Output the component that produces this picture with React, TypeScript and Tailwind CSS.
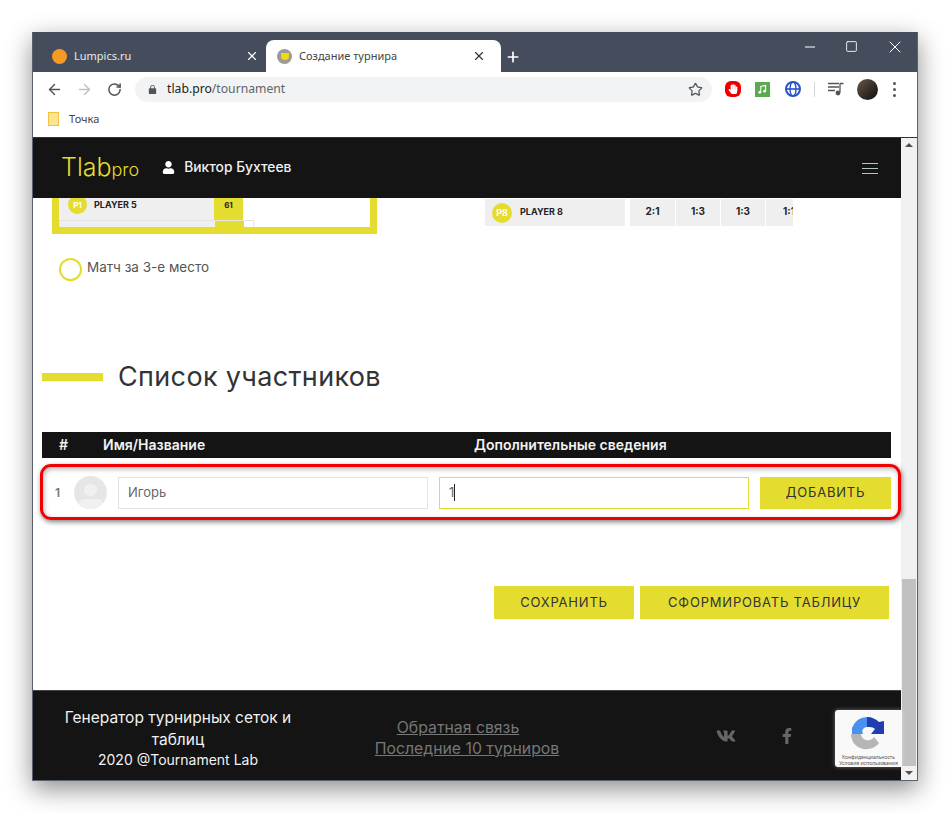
import React from 'react';
import { ArrowLeft, ArrowRight, RotateCw, Star, X, Plus, Minus, Square } from 'lucide-react';
import { FaVk, FaFacebookF, FaUser, FaHandPaper } from 'react-icons/fa';

const heading = "font-['Inter','Noto_Sans',sans-serif]";

function Tab({ active, title, icon }: { active?: boolean; title: string; icon: React.ReactNode }) {
    return (
        <div className={active
            ? "flex items-center w-[235px] h-[32px] bg-white rounded-t-lg pl-[11px] pr-[15px] text-[#444]"
            : "flex items-center w-[233px] h-[32px] pl-[19px] pr-[7px] text-[#e8eaed]"}>
            {icon}
            <span className="ml-[7px] flex-1 text-[11px] font-['Noto_Sans',sans-serif]">{title}</span>
            <X className={active ? "w-[14px] h-[14px] text-[#333]" : "w-[14px] h-[14px] text-white"} />
        </div>
    );
}

function ScoreCell({ text, width, clipped }: { text: string; width: string; clipped?: boolean }) {
    return (
        <div className={`${width} h-[27px] bg-[#efefef] flex items-center overflow-hidden pb-[2px] text-[10px] font-bold text-[#222] ${clipped ? 'justify-start pl-[17px]' : 'justify-center'}`}>
            <span className="whitespace-nowrap">{text}</span>
        </div>
    );
}

function Browser() {
    return (
        <>
            {/* Tab strip */}
            <div className="h-[40px] bg-[#454d5c] flex items-end relative shrink-0">
                <Tab
                    title="Lumpics.ru"
                    icon={<span className="w-[15px] h-[15px] rounded-full bg-[#f59a23] shrink-0" />}
                />
                <Tab
                    active
                    title="Создание турнира"
                    icon={
                        <span className="w-[15px] h-[15px] rounded-full bg-[#9a9a9a] flex items-center justify-center shrink-0">
                            <span className="w-[8px] h-[7px] rounded-b-full bg-[#f2d90f]" />
                        </span>
                    }
                />
                <Plus className="w-[16px] h-[16px] text-white ml-[4px] mb-[7px]" strokeWidth={2.5} />
                <div className="absolute right-[12px] top-[0px] flex items-center h-[21px] gap-[27px] mt-[4px] text-white">
                    <Minus className="w-[16px] h-[16px]" strokeWidth={1.5} />
                    <Square className="w-[13px] h-[13px]" strokeWidth={1.6} />
                    <X className="w-[20px] h-[20px]" strokeWidth={1.2} />
                </div>
            </div>

            {/* Toolbar */}
            <div className="h-[34px] bg-white flex items-center shrink-0 pl-[13px]">
                <ArrowLeft className="w-[17px] h-[17px] text-[#555]" />
                <ArrowRight className="w-[17px] h-[17px] text-[#c0c0c0] ml-[13px]" />
                <RotateCw className="w-[15px] h-[15px] text-[#555] ml-[14px]" strokeWidth={2.4} />
                <div className="ml-[13px] mt-[1px] w-[577px] h-[25px] rounded-full bg-[#f1f3f4] flex items-center pl-[12px] pr-[9px]">
                    <svg viewBox="0 0 24 24" className="w-[11px] h-[13px] fill-[#555]">
                        <path d="M18 9h-1V7a5 5 0 0 0-10 0v2H6a2 2 0 0 0-2 2v9a2 2 0 0 0 2 2h12a2 2 0 0 0 2-2v-9a2 2 0 0 0-2-2zM9 7a3 3 0 0 1 6 0v2H9z" />
                    </svg>
                    <span className="ml-[9px] flex-1 text-[12.2px] text-[#5f6368] font-['Noto_Sans',sans-serif]">
                        <span className="text-[#222]">tlab.pro</span>/tournament
                    </span>
                    <Star className="w-[15px] h-[15px] text-[#555]" />
                </div>
                <span className="ml-[13px] w-[16px] h-[16px] flex items-center justify-center bg-[#ee0000] rounded-[6px]">
                    <FaHandPaper className="w-[10px] h-[10px] text-white" />
                </span>
                <span className="ml-[14px] w-[15px] h-[15px] bg-[#5aab4f] flex items-center justify-center">
                    <svg viewBox="0 0 16 16" className="w-[11px] h-[11px]">
                        <path d="M5.500 12V3.500l7-1.500v8.500" stroke="#fff" strokeWidth="1.500" fill="none" />
                        <circle cx="4" cy="12" r="2" fill="#fff" />
                        <circle cx="11" cy="10.500" r="2" fill="#fff" />
                    </svg>
                </span>
                <svg viewBox="0 0 16 16" className="ml-[15px] w-[16px] h-[16px]">
                    <circle cx="8" cy="8" r="7" fill="none" stroke="#2a52c8" strokeWidth="2" />
                    <ellipse cx="8" cy="8" rx="3" ry="7" fill="none" stroke="#2a52c8" strokeWidth="1.4" />
                    <path d="M1 8h14" stroke="#2a52c8" strokeWidth="1.6" />
                </svg>
                <span className="ml-[13px] w-px h-[15px] bg-[#d5d5d5]" />
                <svg viewBox="0 0 16 14" className="ml-[13px] w-[16px] h-[14px]">
                    <path d="M0 1.500h11M0 5h11M0 8.500h7M12 1.500h3.500M12 1.500v9" stroke="#555" strokeWidth="1.300" fill="none" />
                    <circle cx="10" cy="11" r="2.400" fill="#555" />
                </svg>
                <span className="ml-[13px] w-[21px] h-[21px] rounded-full bg-gradient-to-br from-[#6b5a4a] to-[#0e0e0e]" />
                <span className="ml-[15px] flex flex-col gap-[3px]">
                    <span className="w-[3px] h-[3px] rounded-full bg-[#555]" />
                    <span className="w-[3px] h-[3px] rounded-full bg-[#555]" />
                    <span className="w-[3px] h-[3px] rounded-full bg-[#555]" />
                </span>
            </div>

            {/* Bookmarks */}
            <div className="h-[31px] bg-white flex items-center pl-[15px] pb-[5px] shrink-0">
                <span className="w-[11px] h-[14px] bg-[#fbe58e] border border-[#f3c23e]" />
                <span className="ml-[10px] text-[11px] text-[#444] font-['Noto_Sans',sans-serif]">Точка</span>
            </div>
        </>
    );
}

function SiteHeader() {
    return (
        <div className={`h-[60px] bg-[#141414] flex items-center shrink-0 ${heading}`}>
            <div className="ml-[28px] flex items-baseline text-[#e4dc2f] font-light">
                <span className="text-[25px]">Tlab</span>
                <span className="text-[18px]">pro</span>
            </div>
            <div className="flex items-center mb-[2px]">
                <FaUser className="ml-[23px] w-[13px] h-[13px] text-white" />
                <span className="ml-[9px] text-[13.800px] font-medium text-[#f0f0f0]">Виктор Бухтеев</span>
            </div>
            <div className="ml-auto mr-[23px] flex flex-col gap-[4px]">
                <span className="w-[16px] h-px bg-[#9fd0d0]" />
                <span className="w-[16px] h-px bg-[#b0c4c4]" />
                <span className="w-[16px] h-px bg-[#b0c4c4]" />
            </div>
        </div>
    );
}

function BracketRemains() {
    return (
        <div className="flex items-start h-[36px]">
            <div className="ml-[19px] w-[325px] h-[36px] border-x-[7px] border-b-[7px] border-[#e4dc2f] bg-white overflow-hidden">
                <div className="flex h-[22px]">
                    <div className="w-[155px] bg-[#efefef] flex items-center pl-[9px] pb-[9px]">
                        <span className="w-[19px] h-[19px] rounded-full bg-[#e4dc2f] text-white text-[8px] font-bold flex items-center justify-center shrink-0">P1</span>
                        <span className="ml-[7px] text-[9px] font-bold text-[#222]">PLAYER 5</span>
                    </div>
                    <div className="w-[29px] bg-[#e4dc2f] flex items-center justify-center pb-[9px] text-[8px] font-bold text-[#222]">61</div>
                </div>
                <div className="flex h-[8px] border-t border-x border-[#e4e4e4] w-[195px]">
                    <div className="w-[155px] bg-[#efefef]" />
                    <div className="w-[29px] bg-[#e4dc2f]" />
                </div>
            </div>
            <div className="ml-[108px] mt-[1px] flex">
                <div className="w-[140px] h-[27px] bg-[#efefef] flex items-center pl-[7px]">
                    <span className="w-[20px] h-[20px] rounded-full bg-[#e4dc2f] text-white text-[9px] font-bold flex items-center justify-center">P8</span>
                    <span className="ml-[8px] mb-[2px] text-[9px] font-bold text-[#222]">PLAYER 8</span>
                </div>
                <div className="ml-[5px] flex gap-px">
                    <ScoreCell text="2:1" width="w-[45px]" />
                    <ScoreCell text="1:3" width="w-[44px]" />
                    <ScoreCell text="1:3" width="w-[44px]" />
                    <ScoreCell text="1:1" width="w-[27px]" clipped />
                </div>
            </div>
        </div>
    );
}

function ParticipantRow() {
    return (
        <div className="relative flex items-center ml-[9px] w-[849px] h-[33px] mt-[18px]">
            <span className="ml-[13px] w-[19px] text-[12px] font-semibold text-[#777]">1</span>
            <span className="w-[33px] h-[33px] rounded-full bg-[#e6e6e6] flex flex-col items-center overflow-hidden shrink-0">
                <span className="mt-[8px] w-[13px] h-[13px] rounded-full bg-[#f0f0f0]" />
                <span className="mt-[3px] w-[24px] h-[12px] rounded-full bg-[#f0f0f0]" />
            </span>
            <div className="ml-[11px] w-[310px] h-[32px] border border-[#e2e2e2] flex items-center pl-[9px] text-[13px] text-[#666]">Игорь</div>
            <div className="ml-[11px] w-[310px] h-[32px] border border-[#e4dc2f] flex items-center pl-[9px] text-[13px] text-[#666]">
                1<span className="w-px h-[17px] bg-[#222]" />
            </div>
            <div className="ml-[11px] w-[131px] h-[32px] bg-[#e4dc2f] flex items-center justify-center text-[13px] tracking-[0.8px] text-[#333]">ДОБАВИТЬ</div>
            {/* red highlight drawn over the row */}
            <div className="absolute left-[-2px] top-[-12px] w-[861px] h-[56px] border-[3px] border-[#f00000] rounded-[11px] shadow-[1px_2px_5px_rgba(0,0,0,0.5),inset_1px_2px_5px_rgba(0,0,0,0.3)]" />
        </div>
    );
}

function Footer() {
    return (
        <div className={`relative h-[90px] bg-[#141414] border-t border-[#444] flex items-center shrink-0 ${heading}`}>
            <div className="ml-[23px] mt-[6px] w-[244px] text-center text-[15.500px] text-[#f2f2f2]">
                <div className="leading-[22px]">Генератор турнирных сеток и</div>
                <div className="leading-[21px]">таблиц</div>
                <div className="leading-[20px] text-[14px]">2020 @Tournament Lab</div>
            </div>
            <div className="ml-[52px] mt-[4px] w-[230px] text-center text-[15.800px] text-[#777] underline">
                <div className="leading-[21px] pr-[18px]">Обратная связь</div>
                <div className="leading-[21px]">Последние 10 турниров</div>
            </div>
            <FaVk className="ml-[134px] w-[20px] h-[20px] text-[#666]" />
            <FaFacebookF className="ml-[43px] w-[16px] h-[16px] text-[#666]" />
            {/* reCAPTCHA badge sits over the footer */}
            <div className="absolute left-[802px] top-[19px] w-[67px] h-[57px] bg-[#f9f9f9] rounded-l-[3px] shadow-[0_0_4px_rgba(255,255,255,0.4)] flex flex-col items-center">
                <svg viewBox="0 0 36 36" className="w-[36px] h-[36px] mt-[6px] mr-[3px]">
                    <path d="M18 1a16 16 0 0 0-15 11v6h11c-2-4 1-7 4-7z" fill="#4a90f0" />
                    <path d="M18 1c5 0 9 2 12 5l5-1v13H22l4-5c-2-2-5-2-8-2z" fill="#1f3fb0" />
                    <path d="M2 18h10c0 6 9 9 13 3l5 6c-8 11-28 7-28-9z" fill="#b5b5b5" />
                </svg>
                <span className="mt-[2px] text-[5px] leading-[6px] text-center text-[#555] whitespace-nowrap font-['Noto_Sans',sans-serif]">Конфиденциальность<br />Условия использования</span>
            </div>
        </div>
    );
}

export default function App() {
    return (
        <div className="w-[950px] h-[813px] bg-white pt-[32px] pl-[32px] overflow-hidden">
            <div className="w-[886px] h-[749px] flex flex-col border-x border-b border-[#5a6270] shadow-[0_8px_24px_rgba(0,0,0,0.45)]">
                <Browser />
                <div className="flex-1 flex min-h-0 border-t border-[#333]">
                    <div className="w-[868px] flex flex-col">
                        <SiteHeader />
                        <div className={`flex-1 bg-white min-h-0 ${heading}`}>
                            <BracketRemains />
                            <div className="ml-[26px] mt-[23px] flex items-center">
                                <span className="w-[23px] h-[23px] rounded-full border-2 border-[#e4dc2f]" />
                                <span className="ml-[5px] mb-[4px] text-[13.500px] text-[#555]">Матч за 3-е место</span>
                            </div>
                            <div className="mt-[77px] flex items-center ml-[9px]">
                                <span className="w-[61px] h-[8px] bg-[#e4dc2f]" />
                                <span className="ml-[15px] mt-[1px] text-[27px] leading-[36px] tracking-[0.35px] text-[#333]">Список участников</span>
                            </div>
                            <div className="mt-[37px] ml-[9px] w-[849px] h-[26px] bg-[#141414] flex items-center pb-[2px] text-[14px] font-semibold text-[#f2f2f2]">
                                <span className="ml-[17px] w-[44px]">#</span>
                                <span className="w-[371px]">Имя/Название</span>
                                <span>Дополнительные сведения</span>
                            </div>
                            <ParticipantRow />
                            <div className="mt-[77px] flex justify-end mr-[12px] gap-[6px] text-[13px] tracking-[0.8px] text-[#333]">
                                <div className="w-[140px] h-[33px] bg-[#e4dc2f] flex items-center justify-center">СОХРАНИТЬ</div>
                                <div className="w-[249px] h-[33px] bg-[#e4dc2f] flex items-center justify-center">СФОРМИРОВАТЬ ТАБЛИЦУ</div>
                            </div>
                        </div>
                        <Footer />
                    </div>
                    {/* Scrollbar */}
                    <div className="w-[16px] bg-[#f1f1f1] flex flex-col items-center">
                        <span className="mt-[5px] w-0 h-0 border-x-[4px] border-x-transparent border-b-[4px] border-b-[#505050]" />
                        <div className="mt-auto w-[14px] h-[187px] bg-[#c1c1c1]" />
                        <span className="mt-[5px] mb-[5px] w-0 h-0 border-x-[4px] border-x-transparent border-t-[4px] border-t-[#505050]" />
                    </div>
                </div>
            </div>
        </div>
    );
}
